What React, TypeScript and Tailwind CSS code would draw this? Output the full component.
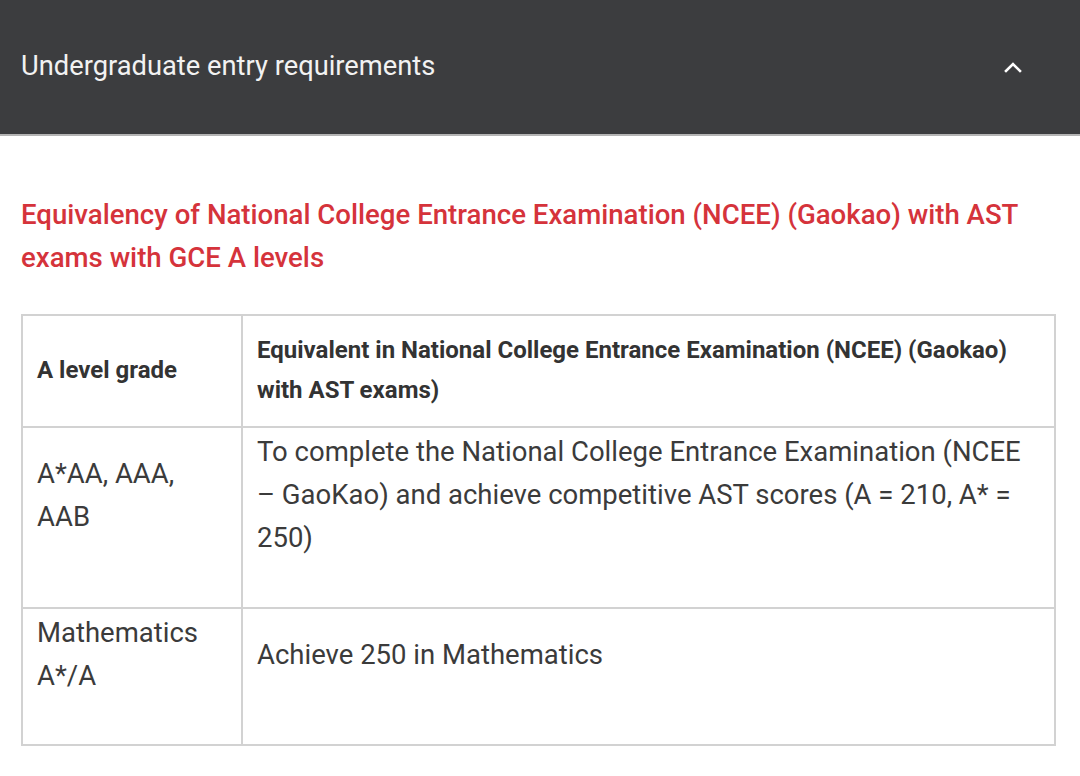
export default function App() {
  const font = { fontFamily: 'Roboto, "Noto Sans", sans-serif' };
  const cell = 'border-2 border-[#d2d2d2] px-[14px] pt-[2px] align-middle';
  return (
    <div className="w-[1080px] min-h-[776px] bg-white" style={font}>
      {/* Accordion header */}
      <div className="h-[136px] bg-[#3c3d3f] border-b-2 border-[#b4b4b4] flex items-center justify-between pl-[21px] pr-[56px]">
        <span className="text-[27.3px] text-[#f2f2f2] leading-none">Undergraduate entry requirements</span>
        <svg width="22" height="14" viewBox="0 0 22 14" fill="none" className="text-white">
          <path d="M4 11 L11 4 L18 11" stroke="currentColor" strokeWidth="2.6" strokeLinecap="square" />
        </svg>
      </div>

      <div className="px-[21px] pt-[57px]">
        <h3 className="text-[27.6px] leading-[43px] font-medium text-[#d5333b]">
          Equivalency of National College Entrance Examination (NCEE) (Gaokao) with AST exams with GCE A levels
        </h3>

        <table className="mt-[35px] w-[1035px] border-collapse border-2 border-[#d2d2d2] text-[#3b3b3b]">
          <thead>
            <tr>
              <th className="w-[220px] border-2 border-[#d2d2d2] px-[14px] pt-[14px] pb-[16px] text-left align-middle text-[24px] leading-[40px] font-bold text-[#333]">
                A level grade
              </th>
              <th className="border-2 border-[#d2d2d2] px-[14px] pt-[14px] pb-[16px] text-left align-middle text-[24px] leading-[40px] font-bold text-[#333]">
                Equivalent in National College Entrance Examination (NCEE) (Gaokao) with AST exams)
              </th>
            </tr>
          </thead>
          <tbody className="text-[27.5px] leading-[43px]">
            <tr>
              <td className={`${cell} pb-[5px]`}>
                <p className="mb-[43px]">A*AA, AAA, AAB</p>
              </td>
              <td className={`${cell} pb-[5px]`}>
                <p className="mb-[43px]">
                  To complete the National College Entrance Examination (NCEE – GaoKao) and achieve competitive AST scores (A = 210, A* = 250)
                </p>
              </td>
            </tr>
            <tr>
              <td className={`${cell} pb-[4px]`}>
                <p className="mb-[43px]">Mathematics A*/A</p>
              </td>
              <td className={`${cell} pb-[4px]`}>
                <p className="mb-[43px]">Achieve 250 in Mathematics</p>
              </td>
            </tr>
          </tbody>
        </table>
      </div>
    </div>
  );
}
